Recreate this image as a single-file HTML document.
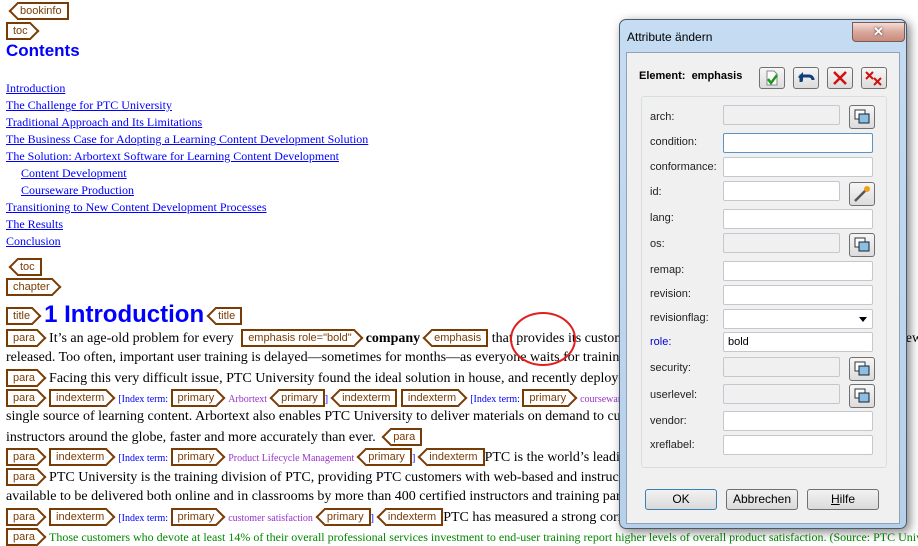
<!DOCTYPE html>
<html><head><meta charset="utf-8"><style>
body{margin:0;width:918px;height:546px;overflow:hidden;background:#fff;position:relative;font-family:"Liberation Serif",serif;}
#wrap{position:absolute;left:0;top:0;width:918px;height:546px;overflow:hidden}
.ln{position:absolute;left:6px;width:2000px;white-space:nowrap;font-size:14px;line-height:18px;color:#000}
.t,.e{display:inline-block;position:relative;border:2px solid #7a3c05;font:11px/14px "Liberation Sans",sans-serif;color:#7a3c05;padding:0 5px;background:#fff;vertical-align:1px;height:14px;white-space:nowrap}
.t{border-right:none;margin-right:11px;padding-right:3px}
.t::after{content:"";position:absolute;right:-6px;top:1px;width:10px;height:10px;border-top:2px solid #7a3c05;border-right:2px solid #7a3c05;transform:rotate(45deg);background:#fff}
.t span,.e span{position:relative;z-index:1}
.e{border-left:none;margin-left:11px;padding-left:3px}
.e::before{content:"";position:absolute;left:-6px;top:1px;width:10px;height:10px;border-bottom:2px solid #7a3c05;border-left:2px solid #7a3c05;transform:rotate(45deg);background:#fff}
a{color:#00f;text-decoration:underline;font-size:12px}
.toc{position:absolute;left:6px;font-size:12px;line-height:17px;white-space:nowrap}
.ix{color:#00f;font-size:10px}
.pu{color:#9933cc;font-size:10px}
.gr{color:#080}
.dlg{position:absolute;z-index:50;left:619px;top:19px;width:286px;height:508px;border:1px solid #4a5a6a;border-radius:7px;background:linear-gradient(#c5dcf2,#b7d0ea);box-shadow:3px 3px 10px rgba(0,0,0,.5);font-family:"Liberation Sans",sans-serif;font-size:11px}
.inner{position:absolute;left:6px;top:32px;width:272px;height:470px;background:#f0f0f0;border:1px solid #8ea2b8}
.grp{position:absolute;left:14px;top:43px;width:244px;height:370px;border:1px solid #d8dde2;border-radius:3px}
.lab{position:absolute;left:30px;color:#222}
.fld{position:absolute;left:103px;width:148px;height:18px;border:1px solid #c4c8cc;background:#fff;border-radius:2px}
.fld.dis{background:#f0f0f0;width:115px}
.fld.sm{width:115px}
.ib{position:absolute;left:229px;width:24px;height:22px;border:1px solid #707070;border-radius:3px;background:linear-gradient(#f6f6f6,#dcdcdc)}
.tb{position:absolute;top:45px;width:24px;height:20px;border:1px solid #707070;border-radius:3px;background:linear-gradient(#f6f6f6,#dcdcdc)}
.btn{position:absolute;top:469px;width:70px;height:19px;border:1px solid #707070;border-radius:3px;background:linear-gradient(#f2f2f2,#dadada);text-align:center;line-height:19px;color:#000;font-size:12px}
</style></head><body><div id="wrap">
<div class="ln" style="top:2px"><span class="e"><span>bookinfo</span></span></div>
<div class="ln" style="top:22px"><span class="t"><span>toc</span></span></div>
<div style="position:absolute;left:6px;top:41px;font:bold 17px 'Liberation Sans',sans-serif;color:#00f">Contents</div>
<div class="toc" style="top:80px"><a>Introduction</a></div>
<div class="toc" style="top:97px"><a>The Challenge for PTC University</a></div>
<div class="toc" style="top:114px"><a>Traditional Approach and Its Limitations</a></div>
<div class="toc" style="top:131px"><a>The Business Case for Adopting a Learning Content Development Solution</a></div>
<div class="toc" style="top:148px"><a>The Solution: Arbortext Software for Learning Content Development</a></div>
<div class="toc" style="top:165px;left:21px"><a>Content Development</a></div>
<div class="toc" style="top:182px;left:21px"><a>Courseware Production</a></div>
<div class="toc" style="top:199px"><a>Transitioning to New Content Development Processes</a></div>
<div class="toc" style="top:216px"><a>The Results</a></div>
<div class="toc" style="top:233px"><a>Conclusion</a></div>
<div class="ln" style="top:258px"><span class="e"><span>toc</span></span></div>
<div class="ln" style="top:278px"><span class="t"><span>chapter</span></span></div>
<div class="ln" style="top:301px"><span class="t"><span>title</span></span><span style="font:bold 24px 'Liberation Sans',sans-serif;color:#00f;vertical-align:-2px">1 Introduction</span><span class="e"><span>title</span></span></div>
<div class="ln" style="top:329px"><span class="t"><span>para</span></span>It’s an age-old problem for every <span class="t" style="margin-left:4px"><span>emphasis role="bold"</span></span><b>company</b><span class="e"><span>emphasis</span></span> that provides its customers with software, hardware or other products. A new version is about to be</div>
<div class="ln" style="top:349px">released. Too often, important user training is delayed—sometimes for months—as everyone waits for training materials to be distributed</div>
<div class="ln" style="top:369px"><span class="t"><span>para</span></span>Facing this very difficult issue, PTC University found the ideal solution in house, and recently deployed Arbortext</div>
<div class="ln" style="top:389px"><span class="t"><span>para</span></span><span class="t"><span>indexterm</span></span><span class="ix">[Index term: </span><span class="t"><span>primary</span></span><span class="pu">Arbortext</span><span class="e"><span>primary</span></span><span class="ix">]</span><span class="e"><span>indexterm</span></span> <span class="t"><span>indexterm</span></span><span class="ix">[Index term: </span><span class="t"><span>primary</span></span><span class="pu">courseware</span><span class="e"><span>primary</span></span></div>
<div class="ln" style="top:408px">single source of learning content. Arbortext also enables PTC University to deliver materials on demand to customers and to its</div>
<div class="ln" style="top:428px">instructors around the globe, faster and more accurately than ever. <span class="e"><span>para</span></span></div>
<div class="ln" style="top:448px"><span class="t"><span>para</span></span><span class="t"><span>indexterm</span></span><span class="ix">[Index term: </span><span class="t"><span>primary</span></span><span class="pu">Product Lifecycle Management</span><span class="e"><span>primary</span></span><span class="ix">]</span><span class="e"><span>indexterm</span></span>PTC is the world’s leading PLM</div>
<div class="ln" style="top:468px"><span class="t"><span>para</span></span>PTC University is the training division of PTC, providing PTC customers with web-based and instructor-led</div>
<div class="ln" style="top:488px">available to be delivered both online and in classrooms by more than 400 certified instructors and training partners</div>
<div class="ln" style="top:508px"><span class="t"><span>para</span></span><span class="t"><span>indexterm</span></span><span class="ix">[Index term: </span><span class="t"><span>primary</span></span><span class="pu">customer satisfaction</span><span class="e"><span>primary</span></span><span class="ix">]</span><span class="e"><span>indexterm</span></span>PTC has measured a strong correlation</div>
<div class="ln gr" style="top:528px;font-size:12px"><span class="t"><span>para</span></span>Those customers who devote at least 14% of their overall professional services investment to end-user training report higher levels of overall product satisfaction. (Source: PTC University)</div>
<div style="position:absolute;left:510px;top:312px;width:62px;height:50px;border:2px solid #e02020;border-radius:50%"></div>

<div class="dlg">
<div style="position:absolute;left:7px;top:10px;font-size:12px;color:#000">Attribute ändern</div>
<div style="position:absolute;left:232px;top:2px;width:51px;height:18px;border:1px solid #7a5a55;border-radius:0 0 4px 4px;background:linear-gradient(#f4dcd6,#d9a89c 50%,#c88b7c);color:#fff;text-align:center;font:bold 13px/18px 'Liberation Sans',sans-serif;text-shadow:0 0 2px #333">✕</div>
<div class="inner">
<div style="position:absolute;left:12px;top:17px;font-weight:bold;font-size:11px">Element:&nbsp;&nbsp;emphasis</div>
<div class="tb" style="left:132px;top:14px"><svg width="24" height="20"><path d="M7 3h7l3 3v11H7z" fill="#fff" stroke="#888"/><path d="M8 11l3 4 6-8" stroke="#1a9a1a" stroke-width="2.5" fill="none"/></svg></div>
<div class="tb" style="left:166px;top:14px"><svg width="24" height="20"><path d="M7 14V8h8a4 4 0 014 4" stroke="#123f7a" stroke-width="3" fill="none"/><path d="M4 9l5-5v9z" fill="#123f7a"/></svg></div>
<div class="tb" style="left:200px;top:14px"><svg width="24" height="20"><path d="M6 4l12 12M18 4L6 16" stroke="#d01010" stroke-width="2.5"/></svg></div>
<div class="tb" style="left:234px;top:14px"><svg width="24" height="20"><path d="M4 4l7 7M11 4L4 11M12 10l7 7M19 10l-7 7" stroke="#d01010" stroke-width="2"/></svg></div>
<div class="grp"></div>
</div>
<div class="lab" style="top:91px">arch:</div><div class="fld dis" style="top:85px"></div>
<div class="ib" style="top:85px"><svg width="24" height="22"><rect x="5" y="4" width="10" height="9" fill="#fff" stroke="#333"/><rect x="9" y="8" width="10" height="9" fill="#8ebfe0" stroke="#123"/></svg></div>
<div class="lab" style="top:116px">condition:</div><div class="fld" style="top:113px;border-color:#5b93c9"></div>
<div class="lab" style="top:141px">conformance:</div><div class="fld" style="top:137px"></div>
<div class="lab" style="top:166px">id:</div><div class="fld sm" style="top:161px"></div>
<div class="ib" style="top:162px"><svg width="24" height="22"><path d="M5 18L16 7" stroke="#555" stroke-width="2.5"/><circle cx="17" cy="6" r="3" fill="#f0a020"/></svg></div>
<div class="lab" style="top:192px">lang:</div><div class="fld" style="top:189px"></div>
<div class="lab" style="top:218px">os:</div><div class="fld dis" style="top:213px"></div>
<div class="ib" style="top:213px"><svg width="24" height="22"><rect x="5" y="4" width="10" height="9" fill="#fff" stroke="#333"/><rect x="9" y="8" width="10" height="9" fill="#8ebfe0" stroke="#123"/></svg></div>
<div class="lab" style="top:244px">remap:</div><div class="fld" style="top:241px"></div>
<div class="lab" style="top:268px">revision:</div><div class="fld" style="top:265px"></div>
<div class="lab" style="top:292px">revisionflag:</div><div class="fld" style="top:289px"><div style="position:absolute;right:5px;top:7px;border:4px solid transparent;border-top:5px solid #000"></div></div>
<div class="lab" style="top:316px;color:#00c">role:</div><div class="fld" style="top:312px"><span style="position:absolute;left:4px;top:3px;font-size:11px">bold</span></div>
<div class="lab" style="top:342px">security:</div><div class="fld dis" style="top:337px"></div>
<div class="ib" style="top:337px"><svg width="24" height="22"><rect x="5" y="4" width="10" height="9" fill="#fff" stroke="#333"/><rect x="9" y="8" width="10" height="9" fill="#8ebfe0" stroke="#123"/></svg></div>
<div class="lab" style="top:369px">userlevel:</div><div class="fld dis" style="top:364px"></div>
<div class="ib" style="top:364px"><svg width="24" height="22"><rect x="5" y="4" width="10" height="9" fill="#fff" stroke="#333"/><rect x="9" y="8" width="10" height="9" fill="#8ebfe0" stroke="#123"/></svg></div>
<div class="lab" style="top:395px">vendor:</div><div class="fld" style="top:391px"></div>
<div class="lab" style="top:419px">xreflabel:</div><div class="fld" style="top:415px"></div>
<div class="btn" style="left:25px;border-color:#3c7fb1">OK</div>
<div class="btn" style="left:106px">Abbrechen</div>
<div class="btn" style="left:187px"><u>H</u>ilfe</div>
</div>
</div></body></html>
